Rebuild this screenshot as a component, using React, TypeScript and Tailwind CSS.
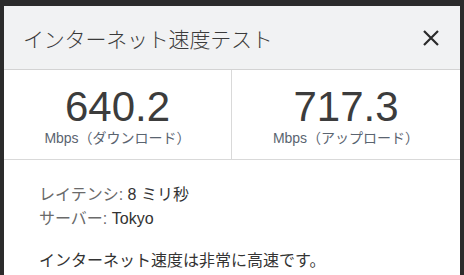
import React from "react";

const font = { fontFamily: '"Liberation Sans", Arial, "Noto Sans CJK JP", sans-serif' };

export default function App() {
  return (
    <div className="w-[464px] h-[275px] bg-[#2b2b2b] pl-[4px] pr-[4px] pt-[6px] overflow-hidden" style={font}>
      <div className="bg-white h-full">
        <div className="h-[64px] bg-[#f1f2f3] border-b border-[#d3d3d3] flex items-center justify-between pl-[19px] pr-[19px] pt-[5px]">
          <div className="text-[21px] text-[#3a3a3a] font-light tracking-[-0.2px]">インターネット速度テスト</div>
          <svg width="18" height="18" viewBox="0 0 18 18" className="mr-[1px] mb-[4px]">
            <path d="M2 2 L16 16 M16 2 L2 16" stroke="#2a2a2a" strokeWidth="2.2" />
          </svg>
        </div>
        <div className="grid grid-cols-2 h-[90px] border-b border-[#d9d9d9]">
          <div className="border-r border-[#d9d9d9] flex flex-col items-center pt-[13px]">
            <div className="text-[42px] leading-[48px] text-[#3c3c3c]">640.2</div>
            <div className="text-[14px] leading-[18px] text-[#5a6470] mt-[-2px]">Mbps（ダウンロード）</div>
          </div>
          <div className="flex flex-col items-center pt-[13px]">
            <div className="text-[42px] leading-[48px] text-[#3c3c3c]">717.3</div>
            <div className="text-[14px] leading-[18px] text-[#5a6470] mt-[-2px]">Mbps（アップロード）</div>
          </div>
        </div>
        <div className="pl-[35px] pt-[23px] text-[16px] leading-[24px]">
          <div><span className="text-[#6a6a6a]">レイテンシ: </span><span className="text-[#333]">8 ミリ秒</span></div>
          <div><span className="text-[#6a6a6a]">サーバー: </span><span className="text-[#333]">Tokyo</span></div>
          <div className="mt-[18px] text-[#333]">インターネット速度は非常に高速です。</div>
        </div>
      </div>
    </div>
  );
}
